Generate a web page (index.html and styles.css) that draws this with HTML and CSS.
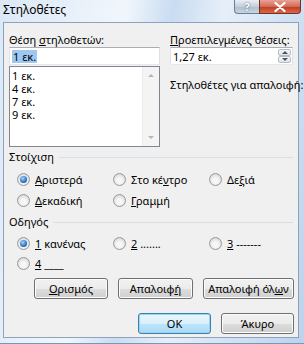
FILE: index.html
```html
<!DOCTYPE html>
<html lang="el">
<head>
  <meta charset="UTF-8" />
  <meta name="viewport" content="width=device-width, initial-scale=1.0"/>
  <title>Στηλοθέτες</title>
  <link rel="stylesheet" href="styles.css">
</head>
<body>

  <div class="window">
    <div class="titlebar">
      <span class="title">Στηλοθέτες</span>
      <div class="caption-btns">
        <span class="cap help">?</span>
        <span class="cap close">
          <svg width="12" height="10" viewBox="0 0 12 10"><path d="M1.5 1 L10.5 9 M10.5 1 L1.5 9" stroke="#fff" stroke-width="2.2" stroke-linecap="round"/></svg>
        </span>
      </div>
    </div>

    <div class="panel">
      <div class="top">
        <div class="col-left">
          <div class="label">Θέση <u>σ</u>τηλοθετών:</div>
          <div class="field"><span class="sel">1 εκ.</span></div>
          <div class="listbox">
            <ul class="items">
              <li>1 εκ.</li>
              <li>4 εκ.</li>
              <li>7 εκ.</li>
              <li>9 εκ.</li>
            </ul>
            <div class="vscroll">
              <span class="arrow up"></span>
              <span class="arrow down"></span>
            </div>
          </div>
        </div>
        <div class="col-right">
          <div class="label"><u>Π</u>ροεπιλεγμένες θέσεις:</div>
          <div class="field spin">
            <span>1,27 εκ.</span>
            <div class="spin-btns">
              <span class="spin-btn"><i class="tri up"></i></span>
              <span class="spin-btn"><i class="tri down"></i></span>
            </div>
          </div>
          <div class="label clear-label">Στηλοθέτες για απαλοιφή:</div>
        </div>
      </div>

      <div class="group-head"><span>Στοίχιση</span></div>
      <div class="radios align-radios">
        <label class="opt"><span class="radio on"></span><span><u>Α</u>ριστερά</span></label>
        <label class="opt"><span class="radio"></span><span>Στο κέ<u>ν</u>τρο</span></label>
        <label class="opt"><span class="radio"></span><span>Δε<u>ξ</u>ιά</span></label>
        <label class="opt"><span class="radio"></span><span><u>Δ</u>εκαδική</span></label>
        <label class="opt"><span class="radio"></span><span><u>Γ</u>ραμμή</span></label>
      </div>

      <div class="group-head"><span>Οδηγός</span></div>
      <div class="radios leader-radios">
        <label class="opt"><span class="radio on"></span><span><u>1</u> κανένας</span></label>
        <label class="opt"><span class="radio"></span><span><u>2</u> .......</span></label>
        <label class="opt"><span class="radio"></span><span><u>3</u> -------</span></label>
        <label class="opt"><span class="radio"></span><span><u>4</u> ____</span></label>
      </div>

      <div class="btn-row">
        <button class="btn w74"><u>Ο</u>ρισμός</button>
        <button class="btn w75">Απαλοιφ<u>ή</u></button>
        <button class="btn w91">Απαλοιφή όλ<u>ω</u>ν</button>
      </div>
      <div class="btn-row footer">
        <button class="btn w73 default">OK</button>
        <button class="btn w73">Άκυρο</button>
      </div>
    </div>
  </div>

</body>
</html>
```

FILE: styles.css
```css
body {
  margin: 0;
  font-family: 'Noto Sans', 'DejaVu Sans', sans-serif;
  font-size: 11px;
  color: #000;
  background: #c4d8ee;
}

.window {
  width: 304px;
  height: 344px;
  box-sizing: border-box;
  display: flex;
  flex-direction: column;
  padding: 0 5px 5px 3px;
  background: linear-gradient(100deg, #dbe8f6 0%, #f1f6fc 35%, #c9dcf1 48%, #e6eff9 62%, #bcd3ec 100%);
  border-bottom: 1px solid #7596bd;
}

/* title bar */
.titlebar {
  height: 22px;
  display: flex;
  justify-content: space-between;
  align-items: flex-start;
}

.title {
  font-size: 12px;
  line-height: 20px;
}

.caption-btns {
  display: flex;
  margin-right: -2px;
}

.cap {
  height: 14px;
  box-sizing: border-box;
  display: flex;
  align-items: center;
  justify-content: center;
  border: 1px solid #6d7f94;
  border-top: none;
}

.help {
  width: 25px;
  border-radius: 0 0 0 4px;
  border-right: none;
  background: linear-gradient(#e9eff6, #c3cfdc 50%, #aebdcc 51%, #c8d6e3);
  color: #fff;
  font-weight: bold;
  font-size: 11px;
  line-height: 12px;
  text-shadow: 0 0 2px #44566b;
}

.close {
  width: 42px;
  border-radius: 0 0 4px 0;
  border-color: #7a2f23;
  background: linear-gradient(#e8a396, #d26a55 50%, #c2391f 51%, #d36b4e);
}

/* dialog body */
.panel {
  flex: 1;
  background: #f0f0f0;
  border: 1px solid #8da2bb;
  padding: 10px 4px 0 5px;
}

.top {
  display: flex;
  gap: 10px;
}

.col-left {
  width: 151px;
}

.col-right {
  width: 123px;
}

.label {
  line-height: 14px;
  height: 14px;
  white-space: nowrap;
}

.clear-label {
  margin-top: 13px;
}

.field {
  height: 18px;
  box-sizing: border-box;
  border: 1px solid #abadb3;
  border-color: #abadb3 #dbdfe6 #e3e9ef #e2e3ea;
  background: #fff;
  display: flex;
  align-items: center;
  padding-left: 2px;
}

.sel {
  background: #9ec7f2;
  line-height: 13px;
  padding: 0 1px;
}

.spin {
  justify-content: space-between;
  padding-right: 1px;
}

.spin-btns {
  display: flex;
  flex-direction: column;
  width: 13px;
  height: 14px;
}

.spin-btn {
  flex: 1;
  border: 1px solid #b4bcc6;
  border-radius: 2px;
  background: linear-gradient(#f6f7f9, #dfe3e8);
  display: flex;
  align-items: center;
  justify-content: center;
}

.tri {
  width: 0;
  height: 0;
  border-left: 3px solid transparent;
  border-right: 3px solid transparent;
}

.tri.up { border-bottom: 3px solid #4b5563; }
.tri.down { border-top: 3px solid #4b5563; }

.listbox {
  margin-top: 1px;
  height: 81px;
  box-sizing: border-box;
  border: 1px solid #82878f;
  background: #fff;
  display: flex;
}

.items {
  flex: 1;
  list-style: none;
  margin: 0;
  padding: 2px 0 0 2px;
}

.items li {
  height: 13px;
  line-height: 13px;
}

.vscroll {
  width: 16px;
  background: #f4f4f4;
  border-left: 1px solid #ececec;
  display: flex;
  flex-direction: column;
  justify-content: space-between;
  align-items: center;
  padding: 7px 0;
}

.arrow {
  width: 0;
  height: 0;
  border-left: 3px solid transparent;
  border-right: 3px solid transparent;
}

.arrow.up { border-bottom: 3px solid #b5b5b5; }
.arrow.down { border-top: 3px solid #b5b5b5; }

/* groups */
.group-head {
  display: flex;
  align-items: center;
  gap: 5px;
  height: 14px;
  line-height: 14px;
  margin-top: 3px;
  padding-right: 1px;
}

.group-head::after {
  content: "";
  flex: 1;
  border-top: 1px solid #d5dfe5;
}

.radios {
  display: grid;
  grid-template-columns: 96px 96px 80px;
  padding-left: 8px;
  margin-top: 5px;
  margin-bottom: 4px;
}

.align-radios {
  grid-auto-rows: 21px;
}

.leader-radios {
  grid-auto-rows: 20px;
  margin-top: 4px;
  margin-bottom: 0;
}

.opt {
  display: flex;
  align-items: center;
  gap: 5px;
  white-space: nowrap;
}

.radio {
  width: 13px;
  height: 13px;
  box-sizing: border-box;
  border-radius: 50%;
  border: 1px solid #9a9a9a;
  background: radial-gradient(circle at 50% 60%, #f7f7f7 30%, #dadada 75%, #c8c8c8);
  display: flex;
  align-items: center;
  justify-content: center;
}

.radio.on::after {
  content: "";
  width: 7px;
  height: 7px;
  border-radius: 50%;
  background: radial-gradient(circle at 40% 35%, #a9d8ff, #2a6fbe 60%, #144a8a);
}

/* buttons */
.btn-row {
  display: flex;
  justify-content: flex-end;
  gap: 10px;
  margin-top: 5px;
}

.footer {
  margin-top: 14px;
}

.btn {
  height: 21px;
  padding: 0;
  font-family: inherit;
  font-size: 11px;
  color: #000;
  border: 1px solid #707070;
  border-radius: 3px;
  background: linear-gradient(#f2f2f2, #ebebeb 50%, #dddddd 51%, #cfcfcf);
  box-shadow: inset 0 0 0 1px #fcfcfc;
}

.btn.default {
  border-color: #3c7fb1;
  box-shadow: inset 0 0 0 1px #9ad5ef;
  background: linear-gradient(#eaf6fd, #d9f0fc 50%, #bee6fd 51%, #a7d9f5);
}

.w73 { width: 73px; }
.w74 { width: 74px; }
.w75 { width: 75px; }
.w91 { width: 91px; }
```
